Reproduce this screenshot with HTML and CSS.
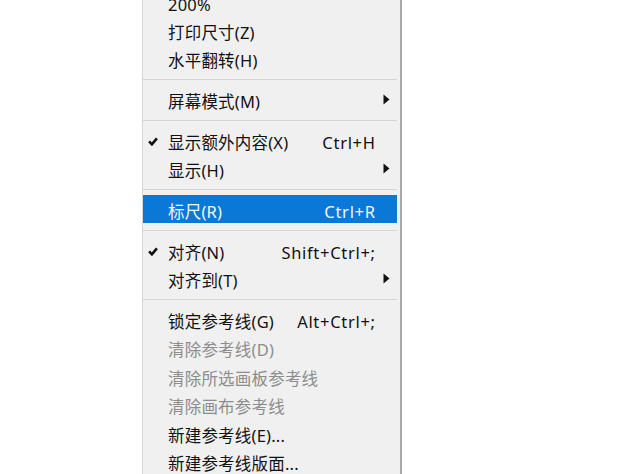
FILE: index.html
```html
<!DOCTYPE html>
<html lang="zh-CN">
<head>
<meta charset="utf-8">
<title>视图菜单</title>
<link rel="stylesheet" href="styles.css">
</head>
<body>
<div class="menu">
  <div class="row"><span class="check"></span><span class="label">200%</span><span class="key"></span><span class="sub"></span></div>
  <div class="row"><span class="check"></span><span class="label">打印尺寸(Z)</span><span class="key"></span><span class="sub"></span></div>
  <div class="row"><span class="check"></span><span class="label">水平翻转(H)</span><span class="key"></span><span class="sub"></span></div>
  <div class="sep"></div>
  <div class="row"><span class="check"></span><span class="label">屏幕模式(M)</span><span class="key"></span><span class="sub"><svg width="7" height="11" viewBox="0 0 7 11"><path d="M0.5 0.5 L6.5 5.5 L0.5 10.5 Z" fill="#111"/></svg></span></div>
  <div class="sep"></div>
  <div class="row"><span class="check"><svg width="10" height="9" viewBox="0 0 10 9"><path d="M1.1 4.4 L3.9 7.3 L8.9 1.3" fill="none" stroke="#111" stroke-width="2.6"/></svg></span><span class="label">显示额外内容(X)</span><span class="key">Ctrl+H</span><span class="sub"></span></div>
  <div class="row"><span class="check"></span><span class="label">显示(H)</span><span class="key"></span><span class="sub"><svg width="7" height="11" viewBox="0 0 7 11"><path d="M0.5 0.5 L6.5 5.5 L0.5 10.5 Z" fill="#111"/></svg></span></div>
  <div class="sep"></div>
  <div class="row active"><span class="check"></span><span class="label">标尺(R)</span><span class="key">Ctrl+R</span><span class="sub"></span></div>
  <div class="sep"></div>
  <div class="row"><span class="check"><svg width="10" height="9" viewBox="0 0 10 9"><path d="M1.1 4.4 L3.9 7.3 L8.9 1.3" fill="none" stroke="#111" stroke-width="2.6"/></svg></span><span class="label">对齐(N)</span><span class="key">Shift+Ctrl+;</span><span class="sub"></span></div>
  <div class="row"><span class="check"></span><span class="label">对齐到(T)</span><span class="key"></span><span class="sub"><svg width="7" height="11" viewBox="0 0 7 11"><path d="M0.5 0.5 L6.5 5.5 L0.5 10.5 Z" fill="#111"/></svg></span></div>
  <div class="sep"></div>
  <div class="row"><span class="check"></span><span class="label">锁定参考线(G)</span><span class="key">Alt+Ctrl+;</span><span class="sub"></span></div>
  <div class="row disabled"><span class="check"></span><span class="label">清除参考线(D)</span><span class="key"></span><span class="sub"></span></div>
  <div class="row disabled"><span class="check"></span><span class="label">清除所选画板参考线</span><span class="key"></span><span class="sub"></span></div>
  <div class="row disabled"><span class="check"></span><span class="label">清除画布参考线</span><span class="key"></span><span class="sub"></span></div>
  <div class="row"><span class="check"></span><span class="label">新建参考线(E)...</span><span class="key"></span><span class="sub"></span></div>
  <div class="row"><span class="check"></span><span class="label">新建参考线版面...</span><span class="key"></span><span class="sub"></span></div>
</div>
</body>
</html>
```

FILE: styles.css
```css
html, body {
  margin: 0;
  padding: 0;
  background: #ffffff;
  overflow: hidden;
  height: 474px;
}

.menu {
  margin: -12.6px 0 0 142px;
  width: 260px;
  box-sizing: border-box;
  background: #f0f0f0;
  border-left: 1px solid #d6d6d6;
  border-right: 2px solid #a9a9a9;
  padding-right: 3px;
  font-family: "Noto Sans", "Noto Sans CJK SC", sans-serif;
  font-size: 16.5px;
  color: #111111;
}

.row {
  height: 28.4px;
  box-sizing: border-box;
  padding-top: 6.5px;
  display: grid;
  grid-template-columns: 25px 1fr auto 22px;
  align-items: center;
  line-height: 1;
  white-space: nowrap;
}

.label {
  letter-spacing: 0.2px;
}

.check {
  display: flex;
  padding-left: 5px;
  margin-top: -3px;
}

.key {
  text-align: right;
  letter-spacing: 0.7px;
  margin-right: -0.7px;
}

.sub {
  display: flex;
  justify-content: center;
  margin-top: -6.5px;
}

.sep {
  height: 12.4px;
  box-sizing: border-box;
  padding-top: 6.6px;
}

.sep::before {
  content: "";
  display: block;
  height: 1px;
  background: #d4d4d4;
}

.active {
  background: #0a78d6;
  color: #f2f7fd;
}

.disabled {
  color: #8d8d8d;
}
```
